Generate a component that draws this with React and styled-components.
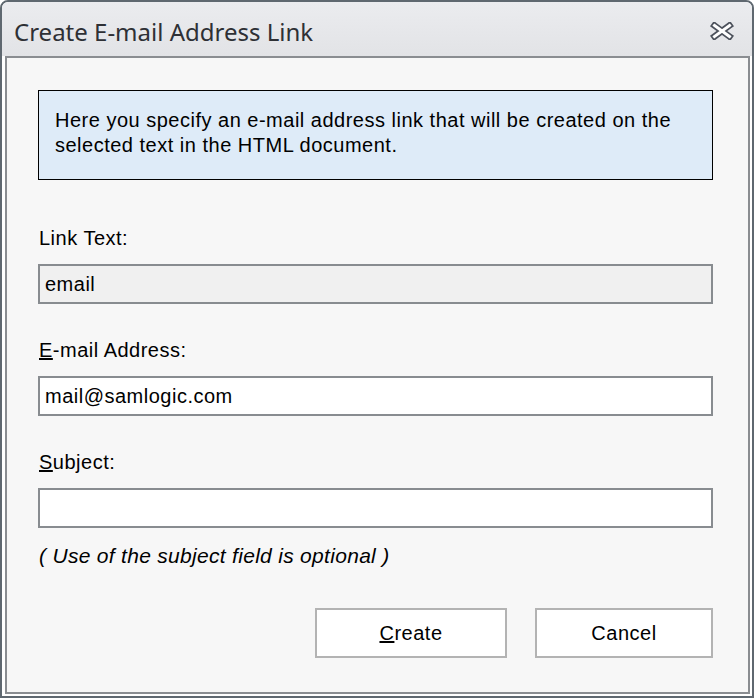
import React from "react";
import styled, { createGlobalStyle } from "styled-components";

const Global = createGlobalStyle`
  html, body { margin: 0; padding: 0; background: #ffffff; }
  * { box-sizing: border-box; }
`;

export default function App() {
  return (
    <>
      <Global />
      <Frame>
        <TitleBar>
          <Title>Create E-mail Address Link</Title>
          <CloseIcon />
        </TitleBar>
        <Body>
          <Panel>
            <Info>
              Here you specify an e-mail address link that will be created on the
              <br />
              selected text in the HTML document.
            </Info>
            <Field $first>
              <Label>Link Text:</Label>
              <Input $disabled>email</Input>
            </Field>
            <Field>
              <Label>
                <u>E</u>-mail Address:
              </Label>
              <Input>mail@samlogic.com</Input>
            </Field>
            <Field>
              <Label>
                <u>S</u>ubject:
              </Label>
              <Input />
            </Field>
            <Note>( Use of the subject field is optional )</Note>
            <Actions>
              <Button $width={192}>
                <u>C</u>reate
              </Button>
              <Button $width={178}>Cancel</Button>
            </Actions>
          </Panel>
        </Body>
      </Frame>
    </>
  );
}

function CloseIcon() {
  return (
    <CloseSvg width="24" height="18" viewBox="0 0 24 18">
      <path d="M4.5 3.5 L19.5 14.5 M19.5 3.5 L4.5 14.5" stroke="#4d525c" strokeWidth="6.5" strokeLinecap="square" fill="none" />
      <path d="M4.5 3.5 L19.5 14.5 M19.5 3.5 L4.5 14.5" stroke="#ffffff" strokeWidth="3" strokeLinecap="square" fill="none" />
    </CloseSvg>
  );
}

const Frame = styled.div`
  width: 754px;
  height: 698px;
  border: 2px solid #5f6870;
  border-radius: 8px 8px 0 0;
  display: flex;
  flex-direction: column;
  overflow: hidden;
  background: #ffffff;
`;

const TitleBar = styled.div`
  height: 54px;
  flex: none;
  display: flex;
  align-items: center;
  justify-content: space-between;
  padding: 0 18px 0 12px;
  background: linear-gradient(#ebecef, #e2e3e6);
`;

const Title = styled.div`
  font-family: "Noto Sans", "Open Sans", sans-serif;
  font-size: 24px;
  color: #2e3035;
  padding-top: 4px;
`;

const CloseSvg = styled.svg`
  display: block;
  margin-top: 4px;
`;

const Body = styled.div`
  flex: 1;
  display: flex;
  padding: 0 2px 2px 3px;
`;

const Panel = styled.div`
  flex: 1;
  border: 2px solid #8a8d91;
  background: #f7f7f7;
  padding: 32px 35px 0 31px;
  display: flex;
  flex-direction: column;
  font-family: "Liberation Sans", Arial, sans-serif;
  font-size: 20px;
  letter-spacing: 0.5px;
  color: #000000;
`;

const Info = styled.div`
  height: 90px;
  border: 1px solid #000000;
  background: #deebf8;
  padding: 17px 16px 0 16px;
  line-height: 25px;
`;

const Field = styled.div`
  display: flex;
  flex-direction: column;
  margin-top: ${(p) => (p.$first ? "46px" : "34px")};
`;

const Label = styled.div`
  line-height: 24px;
  height: 24px;
  padding-left: 1px;
  margin-bottom: 14px;
`;

const Input = styled.div`
  height: 40px;
  border: 2px solid #888c90;
  background: ${(p) => (p.$disabled ? "#f0f0f0" : "#ffffff")};
  padding: 0 5px;
  display: flex;
  align-items: center;
`;

const Note = styled.div`
  margin-top: 16px;
  line-height: 24px;
  font-size: 21px;
  letter-spacing: 0.3px;
  font-style: italic;
  padding-left: 1px;
`;

const Actions = styled.div`
  display: flex;
  justify-content: flex-end;
  gap: 28px;
  margin-top: 40px;
`;

const Button = styled.div`
  width: ${(p) => p.$width}px;
  height: 50px;
  border: 2px solid #b3b3b3;
  background: #ffffff;
  display: flex;
  align-items: center;
  justify-content: center;
`;
